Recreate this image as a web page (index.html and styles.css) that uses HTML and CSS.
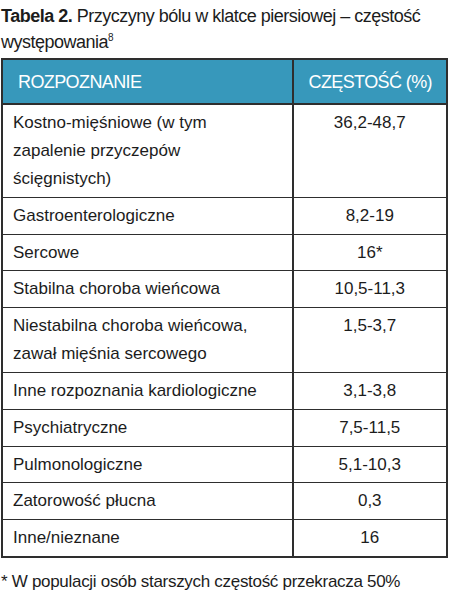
FILE: index.html
```html
<!DOCTYPE html>
<html lang="pl">
<head>
    <meta charset="UTF-8">
    <meta name="viewport" content="width=device-width, initial-scale=1.0">
    <title>Tabela 2</title>
    <link rel="stylesheet" href="styles.css">
</head>
<body>
    <p class="caption"><b>Tabela 2.</b> Przyczyny bólu w klatce piersiowej – częstość występowania<sup>8</sup></p>
    <table class="freq-table">
        <thead>
            <tr>
                <th class="col-name">ROZPOZNANIE</th>
                <th class="col-value">CZĘSTOŚĆ (%)</th>
            </tr>
        </thead>
        <tbody>
            <tr><td>Kostno-mięśniowe (w tym<br>zapalenie przyczepów<br>ścięgnistych)</td><td>36,2-48,7</td></tr>
            <tr><td>Gastroenterologiczne</td><td>8,2-19</td></tr>
            <tr><td>Sercowe</td><td>16*</td></tr>
            <tr><td>Stabilna choroba wieńcowa</td><td>10,5-11,3</td></tr>
            <tr><td>Niestabilna choroba wieńcowa,<br>zawał mięśnia sercowego</td><td>1,5-3,7</td></tr>
            <tr><td>Inne rozpoznania kardiologiczne</td><td>3,1-3,8</td></tr>
            <tr><td>Psychiatryczne</td><td>7,5-11,5</td></tr>
            <tr><td>Pulmonologiczne</td><td>5,1-10,3</td></tr>
            <tr><td>Zatorowość płucna</td><td>0,3</td></tr>
            <tr><td>Inne/nieznane</td><td>16</td></tr>
        </tbody>
    </table>
    <p class="footnote">* W populacji osób starszych częstość przekracza 50%</p>
</body>
</html>
```

FILE: styles.css
```css
:root {
    --head-color: #3798bb;
    --line-color: #2e2e2e;
    --text-color: #1c1c1c;
}
body {
    margin: 0;
    padding: 0 1px;
    font-family: 'Liberation Sans', Arial, sans-serif;
    font-size: 17px;
    letter-spacing: 0;
    color: var(--text-color);
    background-color: white;
}
.caption {
    margin: 0;
    padding: 3px 0 0 0;
    width: 440px;
    font-size: 18px;
    letter-spacing: -0.5px;
    line-height: 26px;
    height: 58px;
    box-sizing: border-box;
}
.caption sup {
    font-size: 10px;
    line-height: 0;
}
.freq-table {
    width: 447px;
    border-collapse: collapse;
    border: 2px solid var(--line-color);
}
.freq-table th,
.freq-table td {
    border: 1px solid var(--line-color);
    padding: 4px 10px 3.8px 10px;
    line-height: 28px;
    vertical-align: top;
    text-align: left;
}
.freq-table th {
    background-color: var(--head-color);
    color: white;
    font-weight: normal;
    font-size: 18px;
    letter-spacing: -0.6px;
    white-space: nowrap;
    padding: 0 14px 0 15px;
    height: 43px;
    vertical-align: middle;
    border-width: 0 2px 2px 0;
}
.freq-table .col-name {
    width: 272px;
}
.freq-table td:last-child,
.freq-table .col-value {
    text-align: center;
}
.freq-table td:first-child,
.freq-table th:first-child {
    border-right-width: 2px;
}
.footnote {
    margin: 14px 0 0 0;
    font-size: 17px;
    letter-spacing: -0.3px;
}
```
